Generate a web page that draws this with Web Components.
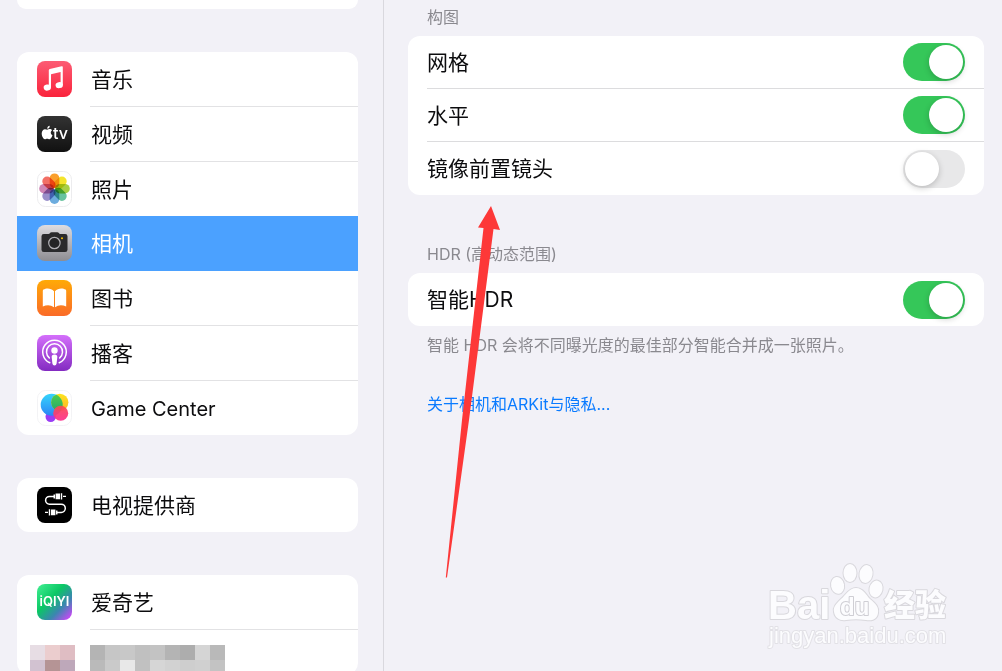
<!DOCTYPE html>
<html lang="zh-CN">
<head>
<meta charset="utf-8">
<meta name="viewport" content="width=device-width, initial-scale=1">
<title>设置</title>
<style>
  body {
    margin: 0;
    height: 100vh;
    overflow: hidden;
    background: #f2f1f7;
    color: #0c0c0e;
    font-family: Inter, "Noto Sans CJK SC", sans-serif;
    font-size: 21px;
  }
</style>
</head>
<body>
<settings-app>
  <nav-card slot="sidebar" tail></nav-card>
  <nav-card slot="sidebar">
    <nav-row icon="music" line>音乐</nav-row>
    <nav-row icon="tv" line>视频</nav-row>
    <nav-row icon="photos">照片</nav-row>
    <nav-row icon="camera" selected>相机</nav-row>
    <nav-row icon="books" line>图书</nav-row>
    <nav-row icon="podcasts" line>播客</nav-row>
    <nav-row icon="games" latin>Game Center</nav-row>
  </nav-card>
  <nav-card slot="sidebar">
    <nav-row icon="provider">电视提供商</nav-row>
  </nav-card>
  <nav-card slot="sidebar">
    <nav-row icon="iqiyi" line>爱奇艺</nav-row>
    <mosaic-row></mosaic-row>
  </nav-card>

  <setting-group>
    <span slot="title">构图</span>
    <setting-row checked line>网格</setting-row>
    <setting-row checked line>水平</setting-row>
    <setting-row>镜像前置镜头</setting-row>
  </setting-group>
  <setting-group>
    <span slot="title">HDR (高动态范围)</span>
    <setting-row checked>智能HDR</setting-row>
    <span slot="note">智能 HDR 会将不同曝光度的最佳部分智能合并成一张照片。</span>
  </setting-group>
  <more-link>关于相机和ARKit与隐私...</more-link>

  <red-arrow slot="overlay"></red-arrow>
  <water-mark slot="overlay"></water-mark>
</settings-app>

<script>
const icons = {
  music: `
    <linearGradient id="g" x2="0" y2="1"><stop stop-color="#fc5c74"/><stop offset="1" stop-color="#fa233b"/></linearGradient>
    <rect width="35" height="36" rx="8" fill="url(#g)"/>
    <path fill="#fff" d="M11.8 9.3q0-1 1-1.3l11.8-2.8q1.2-.3 1.2.8v18h-2.2V10.9L14 13.2v13.1h-2.2z"/>
    <ellipse cx="10.2" cy="26.6" rx="3.7" ry="3" transform="rotate(-12 10 26)" fill="#fff"/>
    <ellipse cx="22.2" cy="24.2" rx="3.7" ry="3" transform="rotate(-12 22 24)" fill="#fff"/>`,
  tv: `
    <linearGradient id="g" x2="0" y2="1"><stop stop-color="#333"/><stop offset="1" stop-color="#111"/></linearGradient>
    <rect width="35" height="36" rx="8" fill="url(#g)"/>
    <path fill="#fff" d="M10.2 13.7c.8 0 1.5-.6 2.600-.6 1 0 1.800.5 2.300 1.200-1.900 1.200-1.700 4.100.4 5-.7 1.900-1.800 3.900-3 3.900-.9 0-1.200-.5-2.300-.5s-1.500.5-2.300.5c-1.500 0-3.200-3-3.200-5.700 0-2.600 1.600-4.300 3.300-4.300.9 0 1.600.5 2.200.5zM10.200 12.800c-.1-1.500 1-2.900 2.500-3.100.2 1.600-1 3.100-2.500 3.100z"/>
    <text x="16" y="23" font-size="16" font-weight="500" fill="#fff">tv</text>`,
  photos: `
    <rect x=".5" y=".5" width="34" height="35" rx="8" fill="#fff" stroke="#ececee"/>
    <g transform="translate(17.5 17.7)" style="isolation:isolate">
      ${['#fa9f2c', '#f4e42c', '#a8cf45', '#68c39f', '#6cacde', '#9a8fca', '#cf86b5', '#f26f66'].map((c, i) =>
        `<rect x="-4.8" y="-15.3" width="9.6" height="14.8" rx="4.8" fill="${c}" transform="rotate(${i * 45})" style="mix-blend-mode:multiply"/>`).join('')}
    </g>`,
  camera: `
    <linearGradient id="g" x2="0" y2="1"><stop stop-color="#dddce0"/><stop offset="1" stop-color="#8e8d92"/></linearGradient>
    <rect width="35" height="36" rx="8" fill="url(#g)"/>
    <path fill="#2a2a2c" d="M6.8 9h4.700q1 0 1.500-.9t1.500-.9h5.800q1 0 1.500.9t1.500.9h4.900q2.300 0 2.300 2.300v13.400q0 2.300-2.300 2.300H6.800q-2.300 0-2.300-2.300V11.300Q4.500 9 6.800 9z"/>
    <circle cx="17.4" cy="18" r="5.7" fill="#242426" stroke="#b1b0b5" stroke-width="1.2"/>
    <circle cx="25" cy="13.2" r="1" fill="#f8c200"/>`,
  books: `
    <linearGradient id="g" x2="0" y2="1"><stop stop-color="#ffaa06"/><stop offset="1" stop-color="#fa6a28"/></linearGradient>
    <rect width="35" height="36" rx="8" fill="url(#g)"/>
    <path fill="#fff" d="M17 11.2C14.3 8 9.3 7.7 6.5 9.600Q5.800 10 5.800 11v15.600Q11.800 23.400 17 27.200zM18 11.200c2.700-3.200 7.700-3.500 10.500-1.600q.7.400.7 1.400v15.600Q23.200 23.400 18 27.200z"/>`,
  podcasts: `
    <linearGradient id="g" x2="0" y2="1"><stop stop-color="#d46ffb"/><stop offset="1" stop-color="#832bc1"/></linearGradient>
    <rect width="35" height="36" rx="8" fill="url(#g)"/>
    <g fill="none" stroke="#fff" stroke-width="1.5" stroke-linecap="round">
      <path d="M12.8 27.8a11.8 11.8 0 1 1 9.4 0"/>
      <path d="M12.3 22.9a8 8 0 1 1 10.4 0"/>
    </g>
    <circle cx="17.5" cy="15.5" r="3.2" fill="#fff"/>
    <path fill="#fff" d="M17.5 19.6c2 0 3 .9 2.800 2.600l-.7 6.400q-.3 2-2.100 2t-2.100-2l-.7-6.400c-.2-1.700.8-2.600 2.800-2.600z"/>`,
  games: `
    <linearGradient id="b" x2="0" y2="1"><stop stop-color="#35d4fb"/><stop offset="1" stop-color="#2b86f6"/></linearGradient>
    <linearGradient id="y" x2="0" y2="1"><stop stop-color="#fce51d"/><stop offset="1" stop-color="#ffb12a"/></linearGradient>
    <linearGradient id="p" x2="0" y2="1"><stop stop-color="#fb4a4f"/><stop offset="1" stop-color="#fc2f8f"/></linearGradient>
    <linearGradient id="e" x2="0" y2="1"><stop stop-color="#4fcf4e"/><stop offset="1" stop-color="#26a86a"/></linearGradient>
    <clipPath id="c"><circle cx="14.7" cy="14.8" r="11"/></clipPath>
    <rect x=".5" y=".5" width="34" height="35" rx="8" fill="#fff" stroke="#f3f3f5"/>
    <circle cx="13.7" cy="26.8" r="5.2" fill="#9a3df5"/>
    <circle cx="14.7" cy="14.8" r="11" fill="url(#b)"/>
    <circle cx="22.8" cy="12.3" r="8.6" fill="url(#y)"/>
    <circle cx="22.8" cy="12.3" r="8.6" fill="url(#e)" clip-path="url(#c)"/>
    <circle cx="23.7" cy="23.3" r="7.5" fill="url(#p)" opacity=".93"/>`,
  provider: `
    <rect width="35" height="36" rx="8"/>
    <g fill="none" stroke="#fff" stroke-width="1.5">
      <path d="M17 9.4h-4.500a3.900 3.900 0 0 0 0 7.800h11.700a4.100 4.100 0 0 1 0 8.200H20"/>
      <path d="M26 9.4h3M11 25.4H8" stroke-width="1.4"/>
    </g>
    <path fill="#fff" d="M16.500 7.400H18v4h-1.500zM18.600 6.500H23v5.800h-4.400zM23.800 6.200h1.400v6.400h-1.400zM19 23.400h1.500v4H19zM14 22.500h4.400v5.800H14zM11.800 22.200h1.400v6.400h-1.400z"/>`,
  iqiyi: `
    <linearGradient id="g" x2="1" y2="1"><stop stop-color="#42f092"/><stop offset=".4" stop-color="#0bc765"/><stop offset=".68" stop-color="#3b86b0"/><stop offset=".92" stop-color="#bd4df0"/></linearGradient>
    <rect width="35" height="36" rx="8" fill="url(#g)"/>
    <text x="17.5" y="22" text-anchor="middle" font-size="13" font-weight="600" fill="#fff">iQIYI</text>`
}

class SettingsApp extends HTMLElement {
  constructor() {
    super()
    this.attachShadow({ mode: 'open' })
    this.shadowRoot.innerHTML = `
      <style>
        :host {
          display: flex;
          position: relative;
          height: 100%;
          overflow: hidden;
        }
        nav {
          box-sizing: border-box;
          flex: 0 0 384px;
          display: flex;
          flex-direction: column;
          gap: 43px;
          padding: 0 25px 0 17px;
          border-right: 1px solid #d9d8de;
        }
        main {
          flex: 1;
          min-width: 0;
          padding: 7px 18px 0 24px;
        }
      </style>
      <nav><slot name="sidebar"></slot></nav>
      <main><slot></slot></main>
      <slot name="overlay"></slot>
    `
  }
}

class NavCard extends HTMLElement {
  constructor() {
    super()
    this.attachShadow({ mode: 'open' })
    this.shadowRoot.innerHTML = `
      <style>
        :host {
          display: block;
          flex: none;
          background: #fff;
          border-radius: 12px;
          overflow: hidden;
        }
        /* end of the group scrolled off the top */
        :host([tail]) {
          height: 9px;
          border-radius: 0 0 12px 12px;
        }
      </style>
      <slot></slot>
    `
  }
}

class NavRow extends HTMLElement {
  constructor() {
    super()
    this.attachShadow({ mode: 'open' })
    this.shadowRoot.innerHTML = `
      <style>
        :host { display: block; }
        a {
          display: flex;
          gap: 18px;
          padding-left: 20px;
          color: inherit;
          text-decoration: none;
        }
        svg {
          flex: none;
          width: 35px;
          height: 36px;
          margin-top: 9px;
        }
        span {
          flex: 1;
          box-sizing: border-box;
          height: 54px;
          line-height: 56px;
          padding-left: 1px;
        }
        :host([line]) span {
          height: 55px;
          border-bottom: 1px solid #e2e2e4;
        }
        :host([latin]) span { font-size: 20px; }
        :host([selected]) {
          background: #4ba1ff;
          color: #fff;
        }
        :host([selected]) span { height: 55px; }
      </style>
      <a href="#${this.getAttribute('icon')}">
        <svg viewBox="0 0 35 36" aria-hidden="true">${icons[this.getAttribute('icon')]}</svg>
        <span><slot></slot></span>
      </a>
    `
    if (this.hasAttribute('selected')) {
      this.shadowRoot.querySelector('a').setAttribute('aria-current', 'page')
    }
  }
}

class MosaicRow extends HTMLElement {
  constructor() {
    super()
    this.attachShadow({ mode: 'open' })
    const grid = rows => rows.map((row, y) => row.map((c, x) =>
      `<rect x="${x * 15}" y="${y * 15}" width="15" height="15" fill="${c}"/>`).join('')).join('')
    this.shadowRoot.innerHTML = `
      <style>
        :host {
          display: flex;
          gap: 15px;
          padding: 15px 0 0 13px;
        }
        svg { flex: none; }
      </style>
      <svg width="45" height="30" shape-rendering="crispEdges">${grid([
        ['#e7dde4', '#ebcdce', '#dfbdc3'],
        ['#d2c2d1', '#b59495', '#bea8ba']
      ])}</svg>
      <svg width="135" height="30" shape-rendering="crispEdges">${grid([
        ['#b4b4b4', '#c6c6c6', '#c8c8c8', '#c0c0c0', '#c3c3c3', '#b4b4b4', '#adadad', '#d5d5d5', '#b9b9b9'],
        ['#bababa', '#cacaca', '#e8e8e8', '#c1c1c1', '#d6d6d6', '#d2d2d2', '#cecece', '#d0d0d0', '#c3c3c3']
      ])}</svg>
    `
  }
}

class SettingGroup extends HTMLElement {
  constructor() {
    super()
    this.attachShadow({ mode: 'open' })
    this.shadowRoot.innerHTML = `
      <style>
        :host {
          display: block;
          margin-bottom: 49px;
        }
        :host(:last-of-type) { margin-bottom: 39px; }
        header, footer {
          padding: 0 19px;
          font-size: 16px;
          line-height: 20px;
          color: #8a898f;
        }
        .card {
          margin: 9px 0;
          background: #fff;
          border-radius: 12px;
          overflow: hidden;
        }
        :host(:first-of-type) .card { margin-bottom: 0; }
        :host(:first-of-type) footer { display: none; }
      </style>
      <header><slot name="title"></slot></header>
      <div class="card"><slot></slot></div>
      <footer><slot name="note"></slot></footer>
    `
  }
}

class SettingRow extends HTMLElement {
  constructor() {
    super()
    this.attachShadow({ mode: 'open' })
    this.shadowRoot.innerHTML = `
      <style>
        :host {
          display: block;
          padding-left: 19px;
        }
        div {
          box-sizing: border-box;
          height: 53px;
          display: flex;
          align-items: center;
          padding-right: 19px;
        }
        :host([line]) div { border-bottom: 1px solid #dcdcde; }
        label {
          flex: 1;
          padding-bottom: 3px;
        }
        input {
          appearance: none;
          box-sizing: border-box;
          width: 62px;
          height: 38px;
          margin: 0;
          padding: 2px;
          border-radius: 19px;
          background: #e8e8e9;
        }
        input::before {
          content: "";
          display: block;
          width: 34px;
          height: 34px;
          border-radius: 50%;
          background: #fff;
          box-shadow: 0 2px 6px rgba(0, 0, 0, .2);
        }
        input:checked { background: #35c759; }
        input:checked::before { margin-left: auto; }
      </style>
      <div>
        <label for="toggle"><slot></slot></label>
        <input id="toggle" type="checkbox" role="switch" ${this.hasAttribute('checked') ? 'checked' : ''}>
      </div>
    `
  }
}

class MoreLink extends HTMLElement {
  constructor() {
    super()
    this.attachShadow({ mode: 'open' })
    this.shadowRoot.innerHTML = `
      <style>
        :host {
          display: block;
          padding: 0 19px;
          font-size: 16px;
          line-height: 20px;
        }
        a {
          color: #0a7bff;
          text-decoration: none;
        }
      </style>
      <a href="#privacy"><slot></slot></a>
    `
  }
}

class RedArrow extends HTMLElement {
  constructor() {
    super()
    this.attachShadow({ mode: 'open' })
    this.shadowRoot.innerHTML = `
      <style>
        :host {
          position: absolute;
          left: 440px;
          top: 200px;
          pointer-events: none;
        }
        svg { display: block; }
      </style>
      <svg width="70" height="380" viewBox="440 200 70 380" aria-hidden="true">
        <path fill="#fd3838" d="M491 206l9 24-6.500-1L469 420 447 577.500h-1.200L462 420 483.500 228l-5.500-.5z"/>
      </svg>
    `
  }
}

class WaterMark extends HTMLElement {
  constructor() {
    super()
    this.attachShadow({ mode: 'open' })
    this.shadowRoot.innerHTML = `
      <style>
        :host {
          position: absolute;
          right: 42px;
          bottom: 11px;
          pointer-events: none;
        }
        svg { display: block; }
        g {
          fill: #fcfcfe;
          stroke: #d9d8dd;
          stroke-width: 2;
          stroke-linejoin: round;
          paint-order: stroke;
        }
      </style>
      <svg width="200" height="110" viewBox="760 550 200 110">
        <g>
          <text x="768" y="619" font-family="Liberation Sans" font-weight="700" font-size="40">Bai</text>
          <ellipse cx="837.5" cy="585.5" rx="6.5" ry="8.500" transform="rotate(-10 837 585)"/>
          <ellipse cx="850" cy="573" rx="6.5" ry="9"/>
          <ellipse cx="866" cy="574" rx="6.5" ry="9" transform="rotate(10 866 574)"/>
          <ellipse cx="876" cy="589" rx="6.5" ry="8.5" transform="rotate(12 876 589)"/>
          <path d="M856 588c7 0 10 7 14 11 6 5 9 8 8 14-1 7-7 8-12 7-7-1-13-1-20 0-6 1-11-2-12-8-1-5 2-8 7-13 5-4 8-11 15-11z"/>
          <text x="840" y="615" font-family="Liberation Sans" font-weight="700" font-size="24" stroke="#cfced4">du</text>
          <text x="884" y="616" font-family="Noto Sans CJK SC" font-weight="900" font-size="31">经验</text>
          <text x="769" y="643" font-family="Liberation Sans" font-size="22" stroke="#e2e1e6">jingyan.baidu.com</text>
        </g>
      </svg>
    `
  }
}

customElements.define('settings-app', SettingsApp)
customElements.define('nav-card', NavCard)
customElements.define('nav-row', NavRow)
customElements.define('mosaic-row', MosaicRow)
customElements.define('setting-group', SettingGroup)
customElements.define('setting-row', SettingRow)
customElements.define('more-link', MoreLink)
customElements.define('red-arrow', RedArrow)
customElements.define('water-mark', WaterMark)
</script>
</body>
</html>
